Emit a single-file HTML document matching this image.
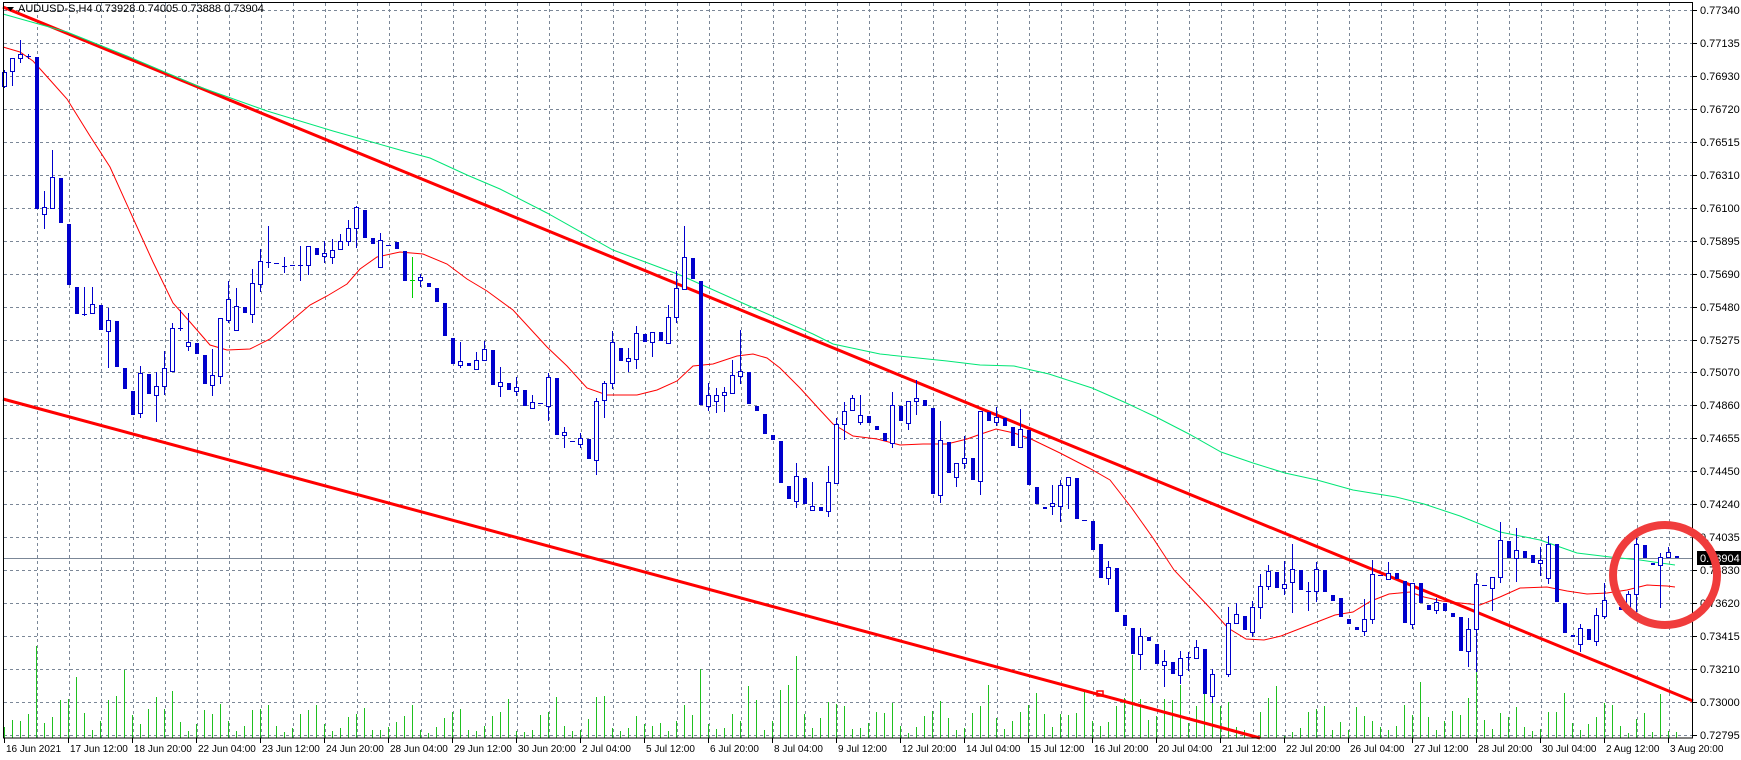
<!DOCTYPE html>
<html><head><meta charset="utf-8">
<style>
html,body{margin:0;padding:0;background:#fff;width:1741px;height:760px;overflow:hidden}
svg{display:block}
text{font-family:"Liberation Sans",sans-serif;font-size:11px;fill:#000}
text.d{font-size:10px}
</style></head>
<body>
<svg id="c" width="1741" height="760" xmlns="http://www.w3.org/2000/svg"></svg>
<script>
var C=[[72,86,70,87,1],[58,71,58,85,1],[54,58,40,62,1],[56,56,54,58,2],[57,209,57,209,0],[207,214,191,228,1],[177,208,150,208,1],[178,223,178,223,0],[224,285,224,285,0],[287,314,287,314,0],
[314,314,287,315,2],[304,313,287,313,1],[305,330,305,330,0],[320,331,308,367,1],[321,367,321,367,0],[368,389,368,389,0],[391,415,391,415,0],[373,413,366,417,1],[374,394,374,394,0],[386,395,372,421,1],
[368,386,351,394,1],[328,371,323,371,1],[328,328,310,330,2],[342,346,313,350,1],[343,354,343,354,0],[355,384,355,384,0],[375,385,349,395,1],[318,376,318,383,1],[299,320,281,322,1],[306,330,288,330,1],
[307,313,307,313,0],[283,314,269,322,1],[261,284,249,291,1],[262,262,226,267,2],[263,263,263,263,2],[266,266,257,272,2],[265,265,265,265,2],[265,265,246,280,2],[246,265,246,274,1],[248,255,248,255,0],
[253,256,241,262,1],[250,257,239,263,1],[241,249,234,249,1],[228,241,220,245,1],[207,228,206,247,1],[210,238,210,238,0],[238,244,238,244,0],[240,267,233,267,1],[245,245,245,245,2],[242,249,242,249,0],
[251,281,251,281,0],[280,280,257,298,3],[277,280,274,286,1],[283,287,283,287,0],[288,302,288,302,0],[303,336,303,336,0],[338,364,338,364,0],[361,365,342,367,1],[363,366,363,366,0],[360,369,352,369,1],
[349,360,341,360,1],[350,385,350,385,0],[382,386,367,396,1],[383,390,383,390,0],[387,391,377,395,1],[390,406,390,406,0],[402,408,395,408,1],[403,403,403,403,2],[377,406,373,420,1],[378,435,378,435,0],
[432,435,427,447,1],[441,441,441,441,2],[438,444,433,447,1],[439,459,439,459,0],[401,460,398,474,1],[383,400,381,417,1],[342,383,331,388,1],[348,361,348,361,0],[358,361,348,371,1],[333,359,326,368,1],
[334,342,334,342,0],[332,342,332,356,1],[332,341,332,341,0],[317,343,305,343,1],[288,317,271,322,1],[257,289,226,289,1],[258,279,258,279,0],[281,405,281,405,0],[395,406,383,410,1],[395,401,388,412,1],
[392,395,387,411,1],[375,393,360,393,1],[371,376,330,383,1],[372,404,372,404,0],[406,411,406,411,0],[414,434,414,434,0],[435,440,435,440,0],[441,483,441,483,0],[486,499,486,499,0],[476,501,463,507,1],
[478,504,478,504,0],[506,510,482,510,1],[507,511,507,511,0],[482,511,466,516,1],[424,483,418,483,1],[411,424,402,439,1],[398,410,395,410,1],[415,422,395,424,1],[416,423,416,423,0],[426,430,426,430,0],
[433,441,433,441,0],[405,443,392,447,1],[406,421,406,421,0],[401,423,401,429,1],[398,401,380,414,1],[400,406,400,406,0],[408,494,408,494,0],[440,495,421,502,1],[442,473,442,473,0],[463,477,463,486,1],
[458,463,436,468,1],[458,480,458,480,0],[411,481,411,494,1],[412,421,412,421,0],[417,422,407,425,1],[418,426,418,426,0],[427,446,427,446,0],[429,447,409,447,1],[430,485,430,485,0],[487,504,487,504,0],
[507,509,507,509,0],[503,506,485,514,1],[485,506,480,521,1],[477,485,477,508,1],[478,519,478,519,0],[520,520,520,520,2],[521,550,521,550,0],[544,578,544,578,0],[567,578,561,584,1],[568,612,568,612,0],
[615,626,615,626,0],[628,654,628,654,0],[636,654,628,669,1],[637,641,637,641,0],[644,664,644,664,0],[661,665,650,686,1],[662,674,662,674,0],[658,675,651,683,1],[657,657,652,670,2],[647,658,640,658,1],
[649,694,649,694,0],[674,696,669,702,1],[0,0,0,0,-1],[623,674,607,676,1],[614,623,603,623,1],[616,630,616,630,0],[607,632,601,636,1],[586,607,574,618,1],[571,586,565,589,1],[572,588,572,588,0],
[584,588,561,594,1],[569,582,544,612,1],[570,590,570,590,0],[591,591,582,610,2],[569,591,562,601,1],[570,592,570,592,0],[595,601,595,601,0],[598,617,598,617,0],[619,624,619,624,0],[627,630,627,630,0],
[619,631,599,635,1],[574,619,560,623,1],[575,575,575,575,2],[573,579,562,579,1],[573,579,573,579,0],[581,623,581,623,0],[583,624,583,628,1],[583,603,583,603,0],[605,610,605,610,0],[602,610,598,613,1],
[603,611,603,611,0],[613,617,613,617,0],[617,651,617,651,0],[629,651,618,666,1],[584,629,573,671,1],[585,585,585,585,2],[577,588,577,610,1],[540,577,522,582,1],[541,558,541,558,0],[550,558,528,581,1],
[551,558,551,558,0],[555,563,555,563,0],[560,563,547,575,1],[544,578,536,583,1],[544,602,544,602,0],[603,633,603,633,0],[635,637,635,637,0],[628,644,624,651,1],[629,640,629,640,0],[615,641,608,645,1],
[600,616,583,618,1],[0,0,0,0,-1],[607,610,607,610,0],[594,607,591,607,1],[544,594,537,613,1],[545,558,545,558,0],[563,565,563,565,0],[557,565,553,607,1],[552,557,547,557,1],[556,557,556,557,0]];
var V=[727,720,721,714,646,723,717,700,699,677,713,730,721,700,696,670,715,724,709,697,709,691,722,731,724,710,714,704,721,731,726,710,709,705,726,732,728,714,710,705,724,731,728,717,714,708,730,730,727,722,716,705,730,733,727,718,712,709,730,731,726,
716,712,699,731,732,730,715,712,697,726,731,730,719,697,696,728,731,728,716,724,726,723,731,721,705,715,669,724,729,728,714,721,686,700,730,721,690,685,656,714,728,718,702,704,706,729,728,723,712,713,703,726,733,727,716,711,701,718,730,728,
713,706,685,718,729,721,712,705,693,714,727,714,715,713,692,721,726,722,706,698,655,699,720,716,699,700,685,723,706,686,699,706,702,727,730,736,712,698,686,736,732,728,712,709,706,730,722,730,707,716,721,727,730,726,705,715,
682,717,730,721,711,715,698,671,720,729,713,717,707,727,731,729,712,712,693,723,730,724,717,703,705,726,733,719,713,732,694,731,732];
var RED="3,47 20,52 33,61 50,80 67,99 90,136 110,167 133,218 153,262 173,303 190,322 210,345 227,350 250,349 270,339 290,322 310,305 327,296 347,284 360,269 377,257 400,252 423,254 447,264 467,279 487,291 513,310 547,347 567,366 587,388 607,395 637,395 657,390 677,381 693,366 713,364 737,356 753,354 767,358 780,368 800,388 820,410 833,424 853,436 877,439 900,445 923,444 947,444 967,439 981,434 996,429 1014,433 1031,439 1060,453 1089,468 1110,480 1131,507 1153,538 1174,570 1192,589 1210,608 1228,628 1246,639 1264,640 1281,636 1299,629 1317,622 1335,615 1353,612 1371,601 1389,594 1410,592 1424,597 1442,601 1460,603 1480,605 1500,597 1520,588 1547,587 1567,591 1587,594 1607,593 1627,590 1647,585 1667,586 1675,587";
var GRN="3,14 67,32 127,56 200,87 267,111 333,131 400,150 430,158 467,175 500,189 547,213 613,250 680,275 747,305 813,334 833,344 880,354 947,361 980,365 1014,366 1049,374 1092,388 1124,402 1156,417 1189,434 1221,452 1253,463 1285,473 1317,480 1353,490 1396,497 1424,504 1460,516 1500,532 1540,540 1577,553 1610,557 1640,560 1675,565";
var P=["0.77340","0.77135","0.76930","0.76720","0.76515","0.76310","0.76100","0.75895","0.75690","0.75480","0.75275","0.75070","0.74860","0.74655","0.74450","0.74240","0.74035","0.73830","0.73620","0.73415","0.73210","0.73000","0.72795"];
var D=["16 Jun 2021","17 Jun 12:00","18 Jun 20:00","22 Jun 04:00","23 Jun 12:00","24 Jun 20:00","28 Jun 04:00","29 Jun 12:00","30 Jun 20:00","2 Jul 04:00","5 Jul 12:00","6 Jul 20:00","8 Jul 04:00","9 Jul 12:00","12 Jul 20:00","14 Jul 04:00","15 Jul 12:00","16 Jul 20:00","20 Jul 04:00","21 Jul 12:00","22 Jul 20:00","26 Jul 04:00","27 Jul 12:00","28 Jul 20:00","30 Jul 04:00","2 Aug 12:00","3 Aug 20:00"];
var s=[];
var B="#0000cc";
var g='';
for(var x=37;x<1693;x+=32){g+='M'+(x+.5)+' 3V738';}
for(var k=0;k<23;k++){var y=Math.round(10+k*32.95)+.5;g+='M4 '+y+'H1693';}
s.push('<path d="'+g+'" stroke="#7b8797" stroke-width="1" stroke-dasharray="3,3" fill="none"/>');
var v='';
for(var i=0;i<V.length;i++){var px=4+8*i+.5;v+='M'+px+' 738V'+V[i];}
s.push('<path d="'+v+'" stroke="#20c020" stroke-width="1" fill="none"/>');
s.push('<line x1="4" y1="558.5" x2="1693" y2="558.5" stroke="#7b8797" stroke-width="1"/>');
s.push('<line x1="3" y1="7" x2="1693" y2="701" stroke="#ff0000" stroke-width="3"/>');
s.push('<line x1="3" y1="399" x2="1260" y2="738" stroke="#ff0000" stroke-width="3"/>');
s.push('<rect x="1097" y="691" width="6" height="5" fill="none" stroke="#ff0000" stroke-width="1.5"/>');
s.push('<polyline points="'+GRN+'" fill="none" stroke="#00e676" stroke-width="1"/>');
s.push('<polyline points="'+RED+'" fill="none" stroke="#ff0000" stroke-width="1"/>');
var w='',bear='',bull='';
for(var i=0;i<C.length;i++){var c=C[i];if(c[4]<0)continue;var px=4+8*i;
 if(c[4]==3){s.push('<path d="M'+(px+.5)+' '+c[2]+'V'+c[3]+'M'+(px-2)+' '+(c[0]+.5)+'H'+(px+3)+'" stroke="#00d000" fill="none"/>');continue;}
 if(c[2]<c[0]||c[3]>c[1]) w+='M'+(px+.5)+' '+c[2]+'V'+(c[3]+1);
 if(c[4]==2){w+='M'+(px-2)+' '+(c[0]+.5)+'H'+(px+3);}
 else if(c[4]==0){bear+='<rect x="'+(px-1)+'" y="'+c[0]+'" width="4" height="'+Math.max(2,c[1]-c[0])+'" fill="'+B+'"/>';}
 else{bull+='<rect x="'+(px-1.5)+'" y="'+(c[0]+.5)+'" width="4" height="'+Math.max(1,c[1]-c[0])+'" fill="#fff" stroke="'+B+'" stroke-width="1"/>';}
}
s.push('<path d="'+w+'" stroke="'+B+'" stroke-width="1" fill="none"/>');
s.push(bear);s.push(bull);
s.push('<rect x="3.5" y="2.5" width="1689" height="735.5" fill="none" stroke="#000" stroke-width="1"/>');
var t='';
for(var k=0;k<23;k++){var y=Math.round(10+k*32.95);t+='<line x1="1693" y1="'+(y+.5)+'" x2="1697" y2="'+(y+.5)+'" stroke="#000"/><text x="1700" y="'+(y+4)+'">'+P[k]+'</text>';}
for(var k=0;k<D.length;k++){var x=4+64*k;t+='<line x1="'+(x+.5)+'" y1="738" x2="'+(x+.5)+'" y2="743" stroke="#000"/><text class="d" x="'+(x+2)+'" y="752">'+D[k]+'</text>';}
s.push(t);
s.push('<rect x="1697" y="551" width="44" height="14" fill="#000"/><text x="1700" y="562" style="fill:#fff">0.73904</text>');
s.push('<path d="M7 7H14L10.5 11Z" fill="#000"/><text x="18" y="12">AUDUSD-S,H4  0.73928 0.74005 0.73888 0.73904</text>');
s.push('<ellipse cx="1665" cy="575" rx="52" ry="50" fill="none" stroke="#f03c3c" stroke-width="8"/>');
document.getElementById('c').innerHTML=s.join('');
</script>
</body></html>
